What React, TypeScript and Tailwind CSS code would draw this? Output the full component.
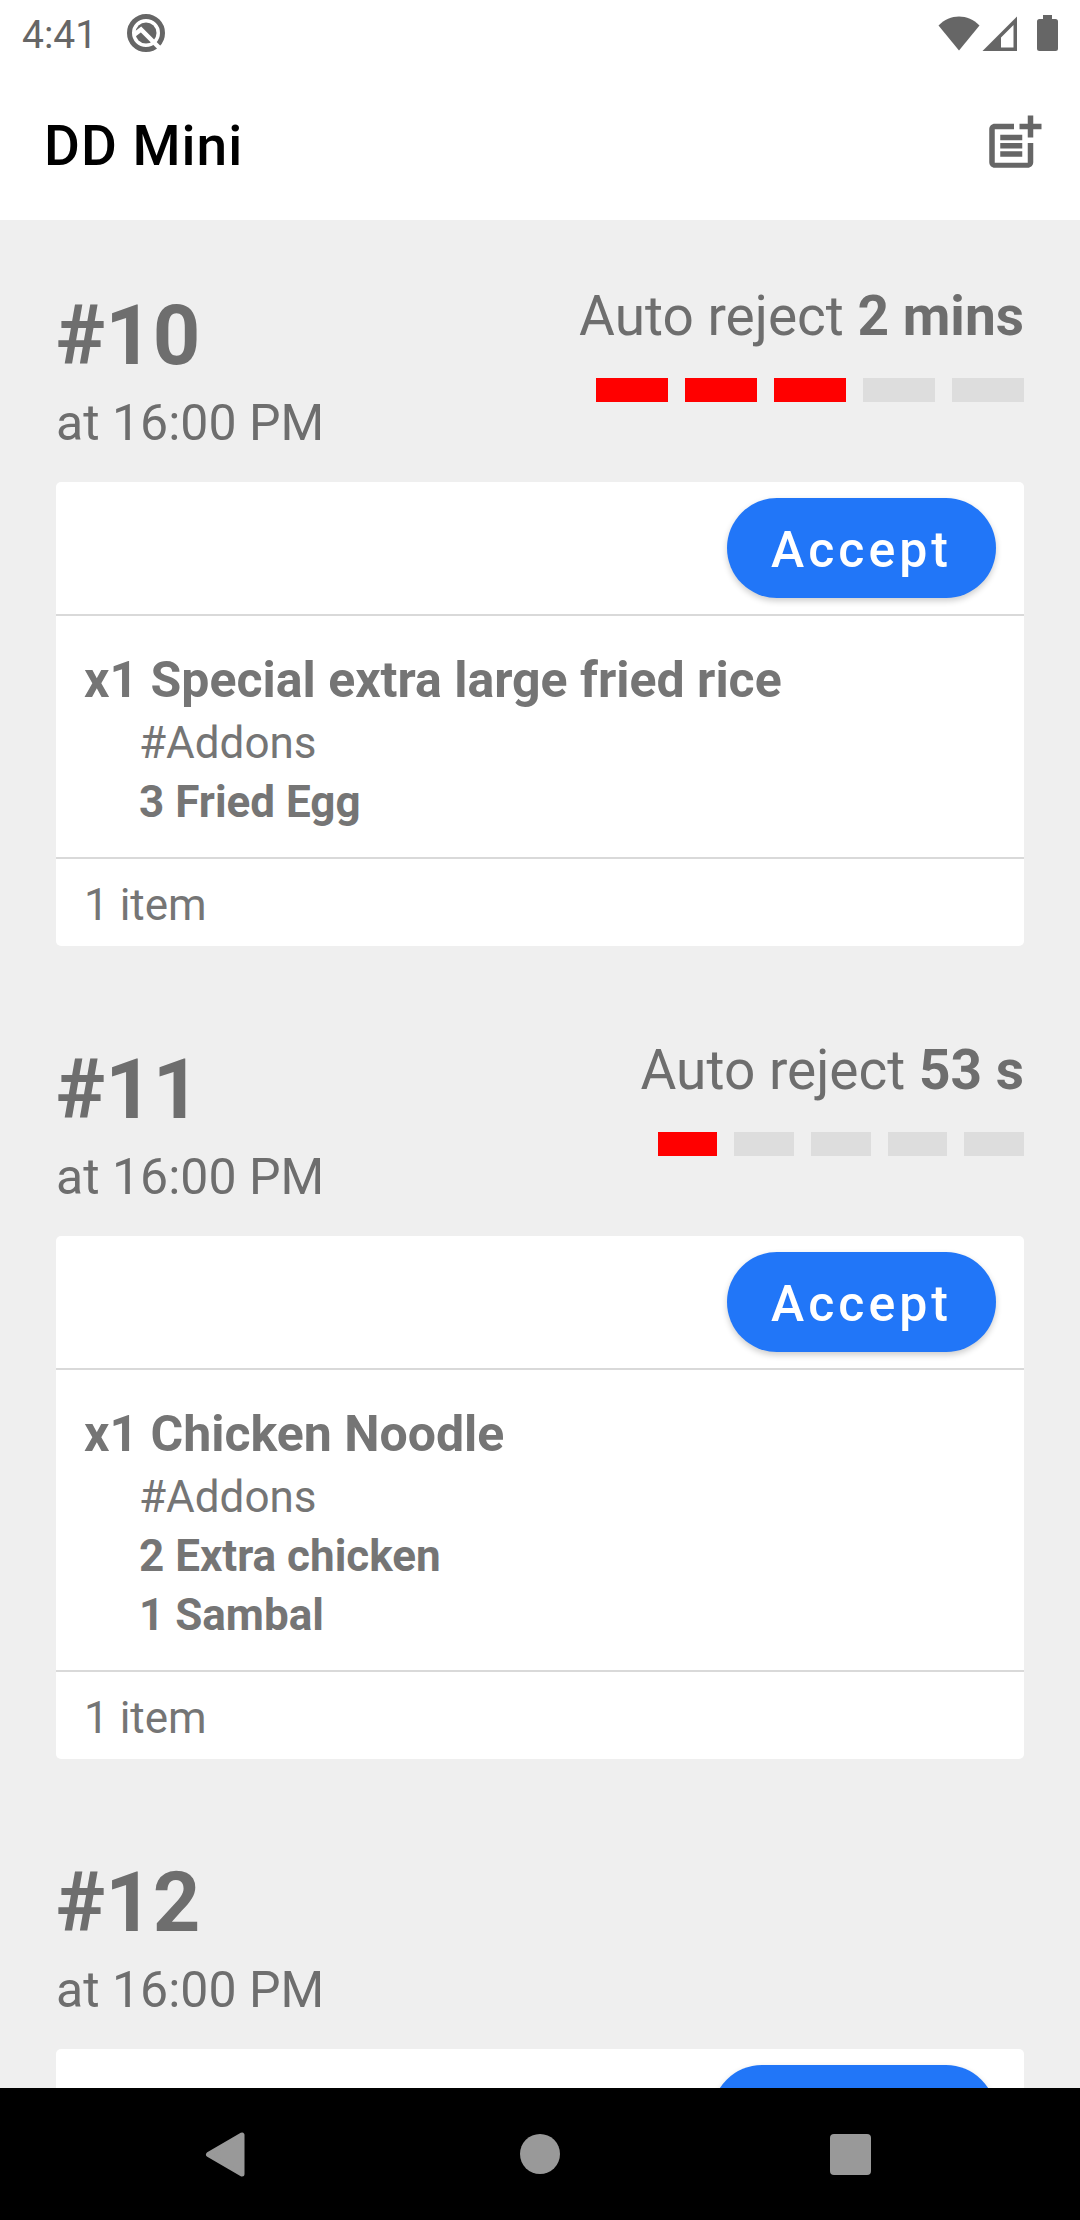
type Addon = { quantity: number; name: string };

type Order = {
  id: number;
  time: string;
  remaining?: string;
  filledBars?: number;
  item?: string;
  addons: Addon[];
};

const orders: Order[] = [
  {
    id: 10,
    time: "16:00 PM",
    remaining: "2 mins",
    filledBars: 3,
    item: "Special extra large fried rice",
    addons: [{ quantity: 3, name: "Fried Egg" }],
  },
  {
    id: 11,
    time: "16:00 PM",
    remaining: "53 s",
    filledBars: 1,
    item: "Chicken Noodle",
    addons: [
      { quantity: 2, name: "Extra chicken" },
      { quantity: 1, name: "Sambal" },
    ],
  },
  {
    id: 12,
    time: "16:00 PM",
    addons: [],
  },
];

function StatusBar() {
  return (
    <div className="flex h-[66px] shrink-0 items-center px-[22px] text-[#666]">
      <span className="pt-1 text-[39px] leading-[46px]">4:41</span>
      <svg className="ml-[30px] h-[38px] w-[38px]" viewBox="0 0 38 38" aria-hidden="true">
        <circle cx="19" cy="19" r="16.5" fill="none" stroke="currentColor" strokeWidth="5" />
        <circle cx="19" cy="19" r="10.5" fill="currentColor" />
        <path d="M7.500 20.500L14 15.500L34 35.500" fill="none" stroke="#fff" strokeWidth="4.5" />
      </svg>
      <div className="ml-auto flex items-center">
        <svg className="h-[35px] w-[42px]" viewBox="0 0 42 35" fill="currentColor" aria-hidden="true">
          <path d="M0.5 9.5C12 -2.5 30 -2.5 41.5 9.5L21 34.5Z" />
        </svg>
        <svg className="ml-[2px] h-[35px] w-[36px]" viewBox="0 0 36 35" fill="currentColor" aria-hidden="true">
          <path fillRule="evenodd" d="M0.5 35L35 0.5V35ZM19 31.5H31.5V9L19 21.5Z" />
        </svg>
        <svg className="ml-[19px] h-[36px] w-[21px]" viewBox="0 0 21 36" fill="currentColor" aria-hidden="true">
          <path d="M6 0H15V4H18.5Q21 4 21 6.500V33.500Q21 36 18.500 36H2.500Q0 36 0 33.500V6.500Q0 4 2.500 4H6Z" />
        </svg>
      </div>
    </div>
  );
}

function AppBar() {
  return (
    <header className="flex h-[154px] shrink-0 items-center justify-between pl-11 pr-[33px]">
      <h1 className="pt-1.5 text-[55px] leading-[64px] font-medium tracking-[1px] text-black">DD Mini</h1>
      <button type="button" aria-label="New order" className="text-[#666]">
        <svg className="h-[66px] w-[66px]" viewBox="0 0 24 24" fill="currentColor" aria-hidden="true">
          <path d="M17 19.220H5V7h7V5H5c-1.100 0-2 .9-2 2v12c0 1.100.9 2 2 2h12c1.100 0 2-.9 2-2v-7h-2v7.220z" />
          <path d="M19 2h-2v3h-3v2h3v3h2V7h3V5h-3V2z" />
          <path d="M7 9h8v2H7zM7 12h8v2H7zM7 15h8v2H7z" />
        </svg>
      </button>
    </header>
  );
}

function Countdown({ remaining, filled }: { remaining: string; filled: number }) {
  return (
    <div className="pt-1">
      <p className="text-[55px] leading-[64px]">
        Auto reject <b className="font-bold">{remaining}</b>
      </p>
      <div className="mt-[30px] flex gap-[17px] pl-[17px]">
        {[0, 1, 2, 3, 4].map((i) => (
          <span key={i} className={i < filled ? "h-6 flex-1 bg-[#ff0000]" : "h-6 flex-1 bg-[#dddddd]"} />
        ))}
      </div>
    </div>
  );
}

function OrderSection({ order }: { order: Order }) {
  return (
    <article className="shrink-0">
      <div className="mb-7 flex items-start justify-between text-[#6e6e6e]">
        <div className="pt-2">
          <h2 className="text-[83px] leading-[96px] font-bold">#{order.id}</h2>
          <p className="mt-2 text-[50px] leading-[62px]">at {order.time}</p>
        </div>
        {order.remaining && <Countdown remaining={order.remaining} filled={order.filledBars ?? 0} />}
      </div>
      <div className="rounded-[5px] bg-white text-[#757575]">
        <div className="flex justify-end px-7 py-4">
          {order.item ? (
            <button
              type="button"
              className="h-[100px] rounded-full bg-[#2176f8] px-11 pt-1 text-[50px] font-medium tracking-[4px] text-white shadow-[0_3px_6px_rgba(0,0,0,0.2)]"
            >
              Accept
            </button>
          ) : (
            <button
              type="button"
              aria-label="Update order"
              className="h-[100px] w-[284px] rounded-full bg-[#2176f8] shadow-[0_3px_6px_rgba(0,0,0,0.2)]"
            />
          )}
        </div>
        {order.item && (
          <>
            <div className="border-y-2 border-[#d9d9d9] px-7 pt-8 pb-[25px]">
              <h3 className="text-[50px] leading-[64px] font-bold">x1 {order.item}</h3>
              <div className="mt-[2px] pl-[55px] text-[44px] leading-[59px]">
                <p>#Addons</p>
                <ul className="font-bold">
                  {order.addons.map((addon) => (
                    <li key={addon.name}>
                      {addon.quantity} {addon.name}
                    </li>
                  ))}
                </ul>
              </div>
            </div>
            <p className="px-7 pt-5 pb-[15px] text-[44px] leading-[52px]">1 item</p>
          </>
        )}
      </div>
    </article>
  );
}

function NavigationBar() {
  return (
    <nav className="grid h-[132px] shrink-0 grid-cols-3 bg-black px-[74px] text-[#999]">
      <button type="button" aria-label="Back" className="flex items-center justify-center">
        <svg className="h-[60px] w-[60px]" viewBox="0 0 60 60" aria-hidden="true">
          <path
            d="M9.500 30.500L43 11V50Z"
            fill="currentColor"
            stroke="currentColor"
            strokeWidth="5"
            strokeLinejoin="round"
          />
        </svg>
      </button>
      <button type="button" aria-label="Home" className="flex items-center justify-center">
        <span className="h-10 w-10 rounded-full bg-[#999]" />
      </button>
      <button type="button" aria-label="Recent apps" className="flex items-center justify-center">
        <span className="h-[41px] w-[41px] rounded-[4px] bg-[#999]" />
      </button>
    </nav>
  );
}

export default function App() {
  return (
    <div className="flex h-screen flex-col overflow-hidden bg-white font-['Roboto',sans-serif]">
      <StatusBar />
      <AppBar />
      <main className="flex min-h-0 flex-1 flex-col gap-[88px] overflow-hidden bg-[#efefef] px-14 pt-[60px]">
        {orders.map((order) => (
          <OrderSection key={order.id} order={order} />
        ))}
      </main>
      <NavigationBar />
    </div>
  );
}
